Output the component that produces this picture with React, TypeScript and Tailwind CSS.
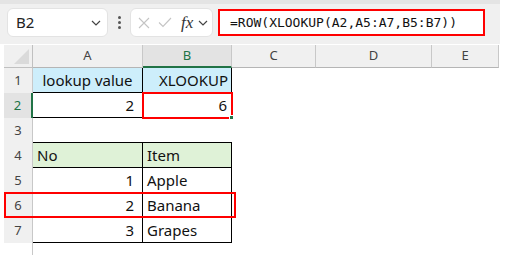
import React from 'react';

const cols = [
  { key: 'A', w: 'w-[110px]' },
  { key: 'B', w: 'w-[89px]' },
  { key: 'C', w: 'w-[84px]' },
  { key: 'D', w: 'w-[116px]' },
  { key: 'E', w: 'w-[67px]' },
];

function Chevron({ className }: { className?: string }) {
  return (
    <svg className={className} width="10" height="6" viewBox="0 0 10 6" fill="none">
      <path d="M1 1 L5 5 L9 1" stroke="#444" strokeWidth="1.2" />
    </svg>
  );
}

function RowHead({ n, selected }: { n: string; selected?: boolean }) {
  return (
    <div
      className={
        selected
          ? 'w-[29px] h-full flex items-center justify-center bg-[#e3e3e3] border-r-2 border-[#217346] text-[#217346] text-[13px]'
          : 'w-[29px] h-full flex items-center justify-center bg-[#f0f0f0] border-r border-[#c8c8c8] text-[#444] text-[13px]'
      }
    >
      {n}
    </div>
  );
}

export default function App() {
  return (
    <div className="w-[508px] h-[255px] bg-white overflow-hidden font-['Noto_Sans',sans-serif] text-[#111]">
      {/* Top strip */}
      <div className="w-[500px] h-[4px] bg-[#e4e4e4]" />

      {/* Formula toolbar */}
      <div className="w-[500px] h-[40px] bg-[#f0f0f0] flex items-start pt-[4px] pl-[7px]">
        <div className="w-[101px] h-[29px] bg-white rounded-[6px] border border-[#e3e3e3] flex items-center justify-between pl-[8px] pr-[6px]">
          <span className="text-[15px] text-[#222]">B2</span>
          <Chevron />
        </div>
        <div className="w-[22px] h-[29px] flex flex-col items-center justify-center gap-[2px]">
          <span className="w-[3px] h-[3px] bg-[#555] rounded-full" />
          <span className="w-[3px] h-[3px] bg-[#555] rounded-full" />
          <span className="w-[3px] h-[3px] bg-[#555] rounded-full" />
        </div>
        <div className="w-[83px] h-[29px] bg-white rounded-[6px] border border-[#e3e3e3] flex items-center pl-[7px] pr-[3px]">
          <svg width="12" height="12" viewBox="0 0 12 12" fill="none">
            <path d="M1 1 L11 11 M11 1 L1 11" stroke="#c4c4c4" strokeWidth="1.1" />
          </svg>
          <svg className="ml-[8px]" width="14" height="11" viewBox="0 0 14 11" fill="none">
            <path d="M1 5.5 L5 9.5 L13 1" stroke="#c4c4c4" strokeWidth="1.1" />
          </svg>
          <span className="ml-[9px] font-['Liberation_Serif',serif] italic text-[17px] leading-none text-[#333]">
            fx
          </span>
          <Chevron className="ml-[5px]" />
        </div>
        <div className="ml-[5px] mt-[1px] w-[267px] h-[27px] bg-white border-2 border-[#ff0000] flex items-center pl-[10px]">
          <span className="font-['DejaVu_Sans_Mono',monospace] text-[13px] text-[#111]">
            =ROW(XLOOKUP(A2,A5:A7,B5:B7))
          </span>
        </div>
      </div>

      {/* Column headers */}
      <div className="mt-[1px] h-[23px] flex">
        <div className="w-[4px]" />
        <div className="w-[29px] h-full bg-[#f0f0f0] border-r border-b border-[#c0c0c0] flex items-end justify-end pr-[3px] pb-[3px]">
          <svg width="15" height="15" viewBox="0 0 15 15">
            <polygon points="15,0 15,15 0,15" fill="#dadada" />
          </svg>
        </div>
        {cols.map((c) =>
          c.key === 'B' ? (
            <div
              key={c.key}
              className={`${c.w} h-full bg-[#e3e3e3] border-r border-[#c8c8c8] border-b-2 border-b-[#217346] flex items-center justify-center text-[13px] text-[#217346]`}
            >
              {c.key}
            </div>
          ) : (
            <div
              key={c.key}
              className={`${c.w} h-full bg-[#f0f0f0] border-r border-[#c8c8c8] border-b border-b-[#b5b5b5] flex items-center justify-center text-[13px] text-[#444]`}
            >
              {c.key}
            </div>
          )
        )}
      </div>

      {/* Row 1 */}
      <div className="h-[25px] flex text-[15px]">
        <div className="w-[4px]" />
        <RowHead n="1" />
        <div className="w-[110px] h-full bg-[#cdeefb] border-r border-b border-black flex items-center justify-center">
          lookup value
        </div>
        <div className="w-[89px] h-full bg-[#cdeefb] border-r border-b border-black flex items-center justify-end pr-[3px]">
          XLOOKUP
        </div>
      </div>

      {/* Row 2 */}
      <div className="h-[25px] flex text-[15px]">
        <div className="w-[4px]" />
        <RowHead n="2" selected />
        <div className="w-[110px] h-full border-r border-b border-black flex items-center justify-end pr-[8px]">
          2
        </div>
        <div className="w-[89px] h-full border-r border-b border-black flex items-center justify-end pr-[4px] relative">
          6
          <div className="absolute -left-[1px] -top-[1px] w-[91px] h-[27px] border-2 border-[#ff0000]" />
          <div className="absolute -right-[3px] -bottom-[3px] w-[5px] h-[5px] bg-[#217346] border border-white" />
        </div>
      </div>

      {/* Row 3 */}
      <div className="h-[25px] flex text-[15px]">
        <div className="w-[4px]" />
        <RowHead n="3" />
        <div className="w-[110px] h-full border-b border-black" />
        <div className="w-[89px] h-full border-b border-black" />
      </div>

      {/* Row 4 */}
      <div className="h-[25px] flex text-[15px]">
        <div className="w-[4px]" />
        <RowHead n="4" />
        <div className="w-[110px] h-full bg-[#dff2d7] border-r border-b border-black flex items-center pl-[4px]">
          No
        </div>
        <div className="w-[89px] h-full bg-[#dff2d7] border-r border-b border-black flex items-center pl-[4px]">
          Item
        </div>
      </div>

      {/* Rows 5-7 */}
      {[
        ['5', '1', 'Apple'],
        ['6', '2', 'Banana'],
        ['7', '3', 'Grapes'],
      ].map(([r, no, item]) => (
        <div key={r} className="h-[25px] flex text-[15px] relative">
          <div className="w-[4px]" />
          <RowHead n={r} />
          <div className="w-[110px] h-full border-r border-b border-black flex items-center justify-end pr-[8px]">
            {no}
          </div>
          <div className="w-[89px] h-full border-r border-b border-black flex items-center pl-[4px]">
            {item}
          </div>
          {r === '6' && (
            <div className="absolute left-[4px] -top-[1px] w-[232px] h-[26px] border-2 border-[#ff0000]" />
          )}
        </div>
      ))}

      {/* Row 8 (cut off) */}
      <div className="h-[12px] flex">
        <div className="w-[4px]" />
        <div className="w-[29px] h-full border-r border-[#c8c8c8]" />
      </div>
    </div>
  );
}
